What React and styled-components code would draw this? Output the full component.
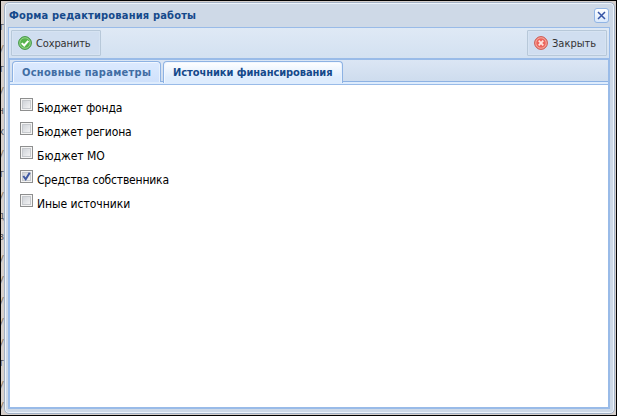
import React from 'react';
import styled, { createGlobalStyle } from 'styled-components';

const Global = createGlobalStyle`
  * { box-sizing: border-box; }
  body { margin: 0; overflow: hidden; font: 12px 'DejaVu Sans Condensed', 'DejaVu Sans', sans-serif; }
`;
const Page = styled.div`
  display: flex;
  width: 617px;
  height: 416px;
  border: 1px solid #000;
  background: #d4cecb;
`;
// The page behind the window: only the last pixels of its text column show.
const Behind = styled.div`
  display: flex;
  flex-direction: column;
  align-items: flex-end;
  width: 3px;
  flex: none;
  overflow: hidden;
  padding-top: 15px;
  font-size: 11px;
  line-height: 21px;
  background: #d8d1cc;
`;
const Letter = styled.div`
  height: 21px;
  flex: none;
  color: ${p => (p.$dim ? '#8f7a60' : '#5d5a5c')};
`;
const Window = styled.div`
  display: flex;
  flex-direction: column;
  width: 611px;
  height: 412px;
  margin-top: 1px;
  padding: 0 4px 4px 3px;
  border: 1px solid #a2b1c5;
  border-radius: 5px;
  background: #ced9e7;
  box-shadow: inset 0 0 0 1px #edf4fc;
`;
const Header = styled.header`
  display: flex;
  justify-content: space-between;
  height: 24px;
  padding: 5px 1px 0 1px;
`;
const Label = styled.span`
  display: block;
  flex: none;
  white-space: nowrap;
  font-size: ${p => p.$size || 12}px;
  font-weight: ${p => (p.$bold ? 700 : 400)};
  letter-spacing: ${p => p.$track || 0}px;
  line-height: 16px;
  color: ${p => p.$color || '#000'};
`;
const CloseTool = styled.button`
  display: flex;
  width: 15px;
  height: 15px;
  padding: 0;
  border: 1px solid #91b5e5;
  border-radius: 3px;
  background: linear-gradient(#fff, #d9e8fb);
`;
const Toolbar = styled.div`
  display: flex;
  justify-content: space-between;
  height: 31px;
  padding: 2px;
  border: 1px solid #99bbe8;
  border-bottom: 0;
  background: linear-gradient(#dfe9f5, #d3e1f1);
`;
const Button = styled.button`
  display: flex;
  align-items: center;
  gap: 4px;
  width: ${p => p.$width}px;
  height: 26px;
  padding: 0 0 0 6px;
  border: 1px solid #b7c8d9;
  border-radius: 1px;
  background: #d0def0;
  font-family: inherit;
  box-shadow: inset 0 0 0 1px #d6e3f2;
`;
const ButtonText = styled.span`
  padding-top: 2px;
`;
const Panel = styled.div`
  display: flex;
  flex-direction: column;
  height: 352px;
  border: 2px solid #99bbe8;
  background: #fff;
`;
const Tabs = styled.div`
  display: flex;
  align-items: flex-start;
  gap: 2px;
  height: 25px;
  padding: 1px 0 0 2px;
  border-bottom: 1px solid #99bbe8;
  background: linear-gradient(#dbe6f4 0, #cedcee 21px, #8db2e3 21px, #8db2e3 22px, #deecfd 22px);
`;
const Tab = styled.div`
  width: ${p => p.$width}px;
  height: ${p => (p.$active ? 22 : 21)}px;
  padding: 3px 0 0 9px;
  border: 1px solid #8db2e3;
  border-bottom: 0;
  border-radius: 4px 4px 0 0;
  background: ${p => (p.$active ? 'linear-gradient(#fff, #deecfd 75%)' : 'linear-gradient(#dceaff, #cfe1fb)')};
  box-shadow: inset 1px 1px 0 #f1f7ff, inset -1px 0 0 #e7f1fd;
`;
const Options = styled.div`
  padding: 11px 0 0 10px;
`;
const Option = styled.label`
  display: flex;
  align-items: flex-start;
  gap: 4px;
  height: 24px;
`;
const Box = styled.span`
  display: flex;
  flex: none;
  align-items: center;
  justify-content: center;
  width: 13px;
  height: 13px;
  margin-top: 2px;
  border: 1px solid #8e8f8f;
  background: linear-gradient(135deg, #cbcfd5, #f6f6f6) center / 9px 9px no-repeat #f4f4f4;
  box-shadow: inset 0 0 0 1px #f4f4f4, inset 0 0 0 2px #c6c9cd;
`;
const OptionText = styled.div`
  padding-top: 4px;
`;

const StatusIcon = ({ ok }) => (
  <svg width="14" height="14" viewBox="0 0 14 14">
    <circle cx="7" cy="7" r="6.4" fill={ok ? '#6bbb5d' : '#ed8379'} stroke={ok ? '#419746' : '#cd5850'} />
    <circle cx="7" cy="7" r="5.2" fill={ok ? '#56b34c' : '#ec655d'} stroke={ok ? '#a1d895' : '#f6b5a8'} strokeWidth=".8" />
    {ok
      ? <path d="M3.7 7.1 6.2 9.5 10.3 4.8" fill="none" stroke="#fff" strokeWidth="2" />
      : <path d="M4.7 4.7 9.3 9.3M9.3 4.7 4.7 9.3" stroke="#ffe5df" strokeWidth="1.8" />}
  </svg>
);

const options = [
  ['Бюджет фонда', -0.15], ['Бюджет региона', -0.14], ['Бюджет МО', 0],
  ['Средства собственника', -0.19, true], ['Иные источники', -0.03],
];
const letters = ['т', 'у', 'т', 'у', 'н', 'х', 'у', 'т', 'у', 'д', 'в', 'у', 'у', 'у', 'у', 'у', 'т', 'у', 'у'];

export default function App() {
  return (
    <>
      <Global />
      <Page>
        <Behind>
          {letters.map((letter, i) => (
            <Letter key={i} $dim={letter === 'у'}>{letter}</Letter>
          ))}
        </Behind>
        <Window>
          <Header>
            <Label $bold $size={11} $track={0.18} $color="#15498b">Форма редактирования работы</Label>
            <CloseTool aria-label="Закрыть">
              <svg width="13" height="13" viewBox="0 0 13 13">
                <path d="m3 3 7 7m0-7-7 7" stroke="#3554a5" strokeWidth="1.5" />
              </svg>
            </CloseTool>
          </Header>
          <Toolbar>
            <Button $width={90}>
              <StatusIcon ok />
              <ButtonText><Label $size={11} $track={-0.12} $color="#333">Сохранить</Label></ButtonText>
            </Button>
            <Button $width={80}>
              <StatusIcon />
              <ButtonText><Label $size={11} $color="#333">Закрыть</Label></ButtonText>
            </Button>
          </Toolbar>
          <Panel>
            <Tabs>
              <Tab $width={149}><Label $bold $size={11} $track={0.29} $color="#416da3">Основные параметры</Label></Tab>
              <Tab $active $width={180}><Label $bold $size={11} $track={-0.07} $color="#15498b">Источники финансирования</Label></Tab>
            </Tabs>
            <Options>
              {options.map(([text, track, on]) => (
                <Option key={text}>
                  <Box>
                    {on && (
                      <svg width="11" height="11" viewBox="0 0 11 11">
                        <path d="M2.3 5 4.7 8.3 8.7 1.7" fill="none" stroke="#4059a2" strokeWidth="2" />
                      </svg>
                    )}
                  </Box>
                  <OptionText><Label $track={track}>{text}</Label></OptionText>
                </Option>
              ))}
            </Options>
          </Panel>
        </Window>
      </Page>
    </>
  );
}
